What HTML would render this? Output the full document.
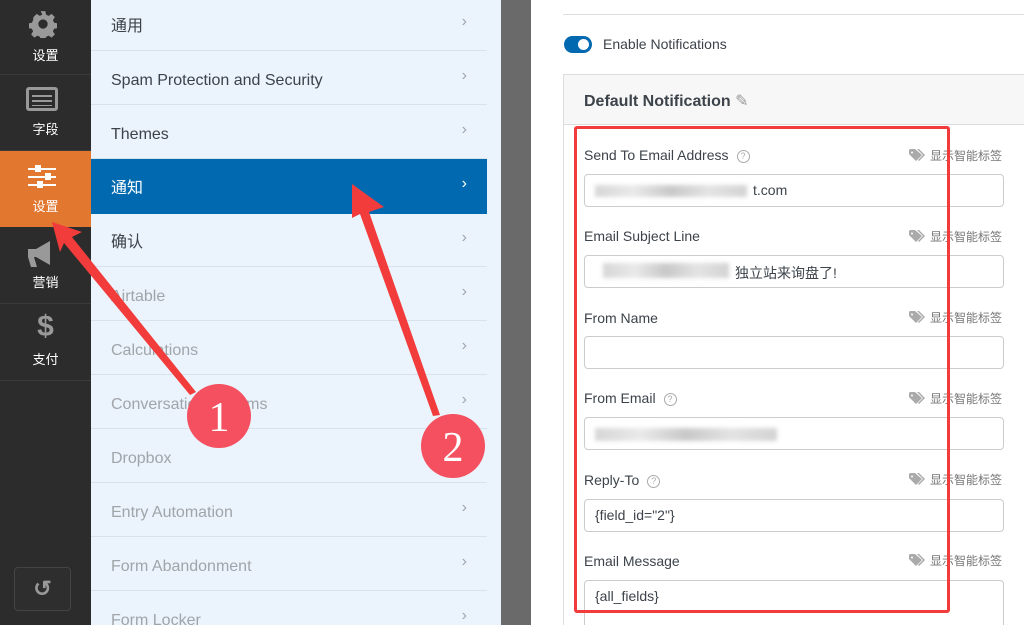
<!DOCTYPE html>
<html><head><meta charset="utf-8"><style>
*{margin:0;padding:0;box-sizing:border-box}
html,body{width:1024px;height:625px;overflow:hidden}
body{position:relative;background:#fff;font-family:"Liberation Sans","Noto Sans CJK SC",sans-serif}
.sb{position:absolute;left:0;top:0;width:91px;height:625px;background:#2c2c2c}
.si{position:absolute;left:0;width:91px;height:76px;border-bottom:1px solid #3a3a3a;color:#fff;font-size:13px;text-align:center}
.si span{position:absolute;left:0;right:0;bottom:12px}
.menu{position:absolute;left:91px;top:0;width:410px;height:625px;background:#ebf3fc}
.mi{position:absolute;left:0;width:396px;height:54px;border-bottom:1px solid #d9e2ec;font-size:16px;color:#3c434a;padding-left:20px;padding-top:3px;line-height:54px}
.mi.g{color:#a0a5aa}
.mi i{position:absolute;right:20px;top:-2px;font-style:normal;color:#a0a5aa;font-size:16px}
.gray{position:absolute;left:501px;top:0;width:30px;height:625px;background:#6a6a6a}
.lab{position:absolute;left:584px;font-size:14px;color:#3c434a}
.tag{position:absolute;left:909px;font-size:12px;color:#777}
.tag svg{vertical-align:-2px;margin-right:5px}
.inp{position:absolute;left:584px;width:420px;height:33px;border:1px solid #ccc;border-radius:4px;background:#fff;font-size:14px;color:#3c434a;padding:7px 10px}
.q{display:inline-block;width:13px;height:13px;border:1px solid #aaa;border-radius:50%;font-size:9px;color:#aaa;text-align:center;line-height:11px;margin-left:8px;vertical-align:1px}
.blur{position:absolute;background:linear-gradient(90deg,#ccc,#e5e5e5,#bbb,#ddd,#c8c8c8);filter:blur(2px);opacity:.8}
</style></head><body>
<div class="sb">
 <div class="si" style="top:0;height:75px"><svg style="position:absolute;left:29px;top:10px" width="28" height="28" viewBox="0 0 24 24"><path fill="#999" d="M10 1h4l.6 3 2.2 1 2.6-1.7 2.8 2.8-1.7 2.6 1 2.2 3 .6v4l-3 .6-1 2.2 1.7 2.6-2.8 2.8-2.6-1.7-2.2 1-.6 3h-4l-.6-3-2.2-1-2.6 1.7-2.8-2.8 1.7-2.6-1-2.2-3-.6v-4l3-.6 1-2.2L3.8 6.1l2.8-2.8 2.6 1.7 2.2-1z M12 8a4 4 0 100 8 4 4 0 100-8z"/></svg><span style="bottom:10px">设置</span></div>
 <div class="si" style="top:75px"><div style="position:absolute;left:26px;top:12px;width:32px;height:24px;border:3px solid #999;border-radius:3px;background:repeating-linear-gradient(#999 0 2px,transparent 2px 5px);background-clip:content-box;padding:2px 3px"></div><span>字段</span></div>
 <div class="si" style="top:151px;background:#e27730;border:none;height:76px"><svg style="position:absolute;left:28px;top:14px" width="28" height="24"><g fill="#fff"><rect x="0" y="3" width="28" height="2"/><rect x="0" y="11" width="28" height="2"/><rect x="0" y="19" width="28" height="2"/><rect x="7" y="0" width="6" height="7"/><rect x="17" y="8" width="6" height="7"/><rect x="9" y="16" width="6" height="7"/></g></svg><span>设置</span></div>
 <div class="si" style="top:227px;height:77px"><svg style="position:absolute;left:26px;top:14px" width="34" height="28"><path fill="#999" d="M2 8h8l14-8v24L10 16H8l3 10H5L2 16z"/></svg><span>营销</span></div>
 <div class="si" style="top:304px;height:77px"><div style="position:absolute;left:0;right:0;top:6px;font-size:30px;color:#999;font-weight:bold">$</div><span>支付</span></div>
 <div style="position:absolute;left:14px;top:567px;width:57px;height:44px;border:1px solid #444;border-radius:4px;background:#2e2e2e;color:#999;font-size:22px;text-align:center;line-height:42px;font-weight:bold">↺</div>
</div>
<div class="menu">
 <div class="mi" style="top:-3px">通用<i>›</i></div>
 <div class="mi" style="top:51px">Spam Protection and Security<i>›</i></div>
 <div class="mi" style="top:105px">Themes<i>›</i></div>
 <div class="mi" style="top:159px;height:55px;background:#0069b0;color:#fff;border:none">通知<i style="color:#fff">›</i></div>
 <div class="mi" style="top:213px">确认<i>›</i></div>
 <div class="mi g" style="top:267px">Airtable<i>›</i></div>
 <div class="mi g" style="top:321px">Calculations<i>›</i></div>
 <div class="mi g" style="top:375px">Conversational Forms<i>›</i></div>
 <div class="mi g" style="top:429px">Dropbox<i>›</i></div>
 <div class="mi g" style="top:483px">Entry Automation<i>›</i></div>
 <div class="mi g" style="top:537px">Form Abandonment<i>›</i></div>
 <div class="mi g" style="top:591px">Form Locker<i>›</i></div>
</div>
<div class="gray"></div>
<div style="position:absolute;left:563px;top:14px;width:461px;height:1px;background:#ddd"></div>
<div style="position:absolute;left:564px;top:36px;width:28px;height:17px;border-radius:9px;background:#0069b0"><div style="position:absolute;right:3px;top:3px;width:11px;height:11px;border-radius:50%;background:#fff"></div></div>
<div style="position:absolute;left:603px;top:36px;font-size:14px;color:#3c434a">Enable Notifications</div>
<div style="position:absolute;left:563px;top:74px;width:470px;height:560px;border:1px solid #ddd;background:#fff"></div>
<div style="position:absolute;left:564px;top:75px;width:460px;height:50px;background:#f7f7f7;border-bottom:1px solid #ddd"></div>
<div style="position:absolute;left:584px;top:91px;font-size:16px;font-weight:bold;color:#3c434a">Default Notification <span style="color:#999;font-weight:normal">✎</span></div>

<div class="lab" style="top:147px">Send To Email Address<span class="q">?</span></div>
<div class="inp" style="top:174px"><span style="margin-left:158px">t.com</span></div>
<div class="blur" style="left:595px;top:185px;width:152px;height:12px"></div>
<div class="lab" style="top:228px">Email Subject Line</div>
<div class="inp" style="top:255px"><span style="margin-left:140px">独立站来询盘了!</span></div>
<div class="blur" style="left:603px;top:263px;width:126px;height:15px"></div>
<div class="lab" style="top:310px">From Name</div>
<div class="inp" style="top:336px"></div>
<div class="lab" style="top:390px">From Email<span class="q">?</span></div>
<div class="inp" style="top:417px"></div>
<div class="blur" style="left:595px;top:428px;width:182px;height:13px"></div>
<div class="lab" style="top:472px">Reply-To<span class="q">?</span></div>
<div class="inp" style="top:499px">{field_id="2"}</div>
<div class="lab" style="top:553px">Email Message</div>
<div class="inp" style="top:580px;height:60px">{all_fields}</div>
<div class="tag" style="top:147px"><svg width="16" height="13" viewBox="0 0 16 13"><path fill="#aaa" d="M0 1V5l7 7 6-6-7-6H1zM3 2.5a1 1 0 110 2 1 1 0 110-2z"/><path fill="#aaa" d="M8 0h2l6 6-6 6-1-1 5-5z"/></svg>显示智能标签</div>
<div class="tag" style="top:228px"><svg width="16" height="13" viewBox="0 0 16 13"><path fill="#aaa" d="M0 1V5l7 7 6-6-7-6H1zM3 2.5a1 1 0 110 2 1 1 0 110-2z"/><path fill="#aaa" d="M8 0h2l6 6-6 6-1-1 5-5z"/></svg>显示智能标签</div>
<div class="tag" style="top:309px"><svg width="16" height="13" viewBox="0 0 16 13"><path fill="#aaa" d="M0 1V5l7 7 6-6-7-6H1zM3 2.5a1 1 0 110 2 1 1 0 110-2z"/><path fill="#aaa" d="M8 0h2l6 6-6 6-1-1 5-5z"/></svg>显示智能标签</div>
<div class="tag" style="top:390px"><svg width="16" height="13" viewBox="0 0 16 13"><path fill="#aaa" d="M0 1V5l7 7 6-6-7-6H1zM3 2.5a1 1 0 110 2 1 1 0 110-2z"/><path fill="#aaa" d="M8 0h2l6 6-6 6-1-1 5-5z"/></svg>显示智能标签</div>
<div class="tag" style="top:471px"><svg width="16" height="13" viewBox="0 0 16 13"><path fill="#aaa" d="M0 1V5l7 7 6-6-7-6H1zM3 2.5a1 1 0 110 2 1 1 0 110-2z"/><path fill="#aaa" d="M8 0h2l6 6-6 6-1-1 5-5z"/></svg>显示智能标签</div>
<div class="tag" style="top:552px"><svg width="16" height="13" viewBox="0 0 16 13"><path fill="#aaa" d="M0 1V5l7 7 6-6-7-6H1zM3 2.5a1 1 0 110 2 1 1 0 110-2z"/><path fill="#aaa" d="M8 0h2l6 6-6 6-1-1 5-5z"/></svg>显示智能标签</div>
<div style="position:absolute;left:574px;top:126px;width:376px;height:487px;border:3px solid #f23c3c;border-radius:3px"></div>

<svg style="position:absolute;left:0;top:0" width="1024" height="625">
 <g fill="#f23c3c">
  <polygon points="52,222 82,232 72,237 196,392 190,395 64,243 60,252"/>
  <polygon points="352,184 384,207 369,212 440,415 433,416 360,214 352,218"/>
 </g>
 <circle cx="219" cy="416" r="32" fill="#f4505f"/>
 <circle cx="453" cy="446" r="32" fill="#f4505f"/>
 <text x="219" y="431" font-family="Liberation Serif,serif" font-size="42" fill="#fff" text-anchor="middle">1</text>
 <text x="453" y="461" font-family="Liberation Serif,serif" font-size="42" fill="#fff" text-anchor="middle">2</text>
</svg>
</body></html>
